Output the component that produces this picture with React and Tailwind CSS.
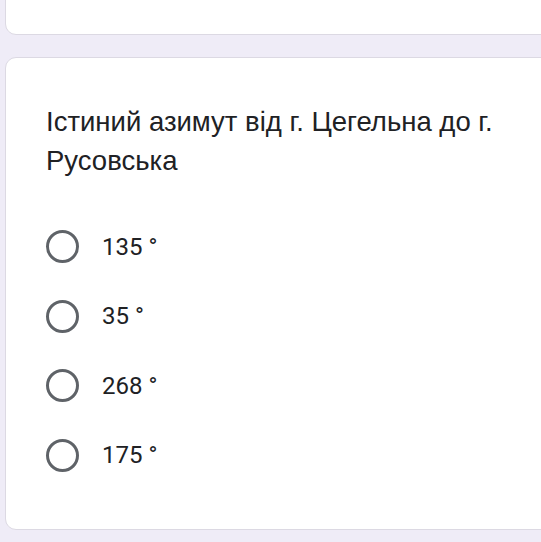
export default function App() {
  const options = ['135 °', '35 °', '268 °', '175 °'];

  return (
    <div className="h-[542px] w-[541px] overflow-hidden bg-[#efecf7] pl-[5px]">
      {/* Previous question card (cut off) */}
      <div className="-mr-6 -mt-6 h-[59px] rounded-b-[11px] border border-[#dcd9e3] bg-white" />

      {/* Question card */}
      <div className="-mr-6 mt-[22px] h-[473px] rounded-[11px] border border-[#dcd9e3] bg-white pl-[40px] pt-[44px]">
        <p className="pr-8 font-['Liberation_Sans',Arial,sans-serif] text-[27.5px] leading-[39px] text-[#202124]">
          Істиний азимут від г. Цегельна до г. Русовська
        </p>

        <div className="mt-[32px] flex flex-col">
          {options.map((opt) => (
            <label key={opt} className="flex h-[69.5px] items-center">
              <span className="h-[33px] w-[33px] shrink-0 rounded-full border-[3.5px] border-[#5f6368]" />
              <span className="ml-[23px] font-['Roboto',sans-serif] text-[24px] text-[#202124]">{opt}</span>
            </label>
          ))}
        </div>
      </div>
    </div>
  );
}
